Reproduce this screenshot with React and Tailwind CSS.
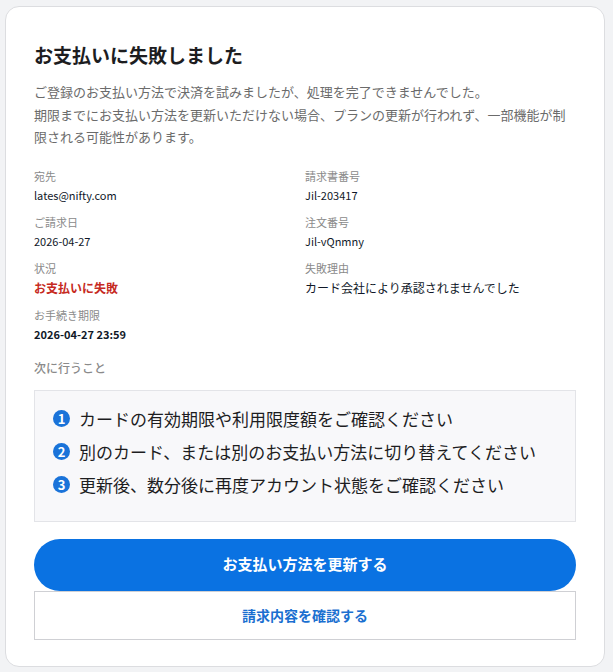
const INFO = [
    { label: '宛先', value: 'lates@nifty.com', cls: 'text-[11px] text-gray-900 leading-[18px]' },
    { label: '請求書番号', value: 'Jil-203417', cls: 'text-[11px] text-gray-900 leading-[18px]' },
    { label: 'ご請求日', value: '2026-04-27', cls: 'text-[11px] text-gray-900 leading-[18px]' },
    { label: '注文番号', value: 'Jil-vQnmny', cls: 'text-[11px] text-gray-900 leading-[18px]' },
    { label: '状況', value: 'お支払いに失敗', cls: 'text-[12px] font-bold text-[#c62a22] leading-[19px]' },
    { label: '失敗理由', value: 'カード会社により承認されませんでした', cls: 'text-[12px] text-gray-900 leading-[19px]' },
    { label: 'お手続き期限', value: '2026-04-27 23:59', cls: 'text-[11px] font-bold text-gray-900 leading-[18px]' },
];

const STEPS = [
    'カードの有効期限や利用限度額をご確認ください',
    '別のカード、または別のお支払い方法に切り替えてください',
    '更新後、数分後に再度アカウント状態をご確認ください',
];

export default function App() {
    return (
        <div className="min-h-[672px] bg-[#f2f3f5] pt-[6px] pl-[5px] pb-[5px] font-['Noto_Sans_CJK_JP',sans-serif]">
            <div className="w-[600px] h-[661px] bg-white border border-[#dcdde0] rounded-[14px] pt-[34px] px-[28px] pb-[26px]">
                <h1 className="text-[19px] leading-[28px] font-bold text-[#1d1d1f]">お支払いに失敗しました</h1>
                <p className="mt-[12px] text-[13px] leading-[22.5px] text-[#6b6b6b]">
                    ご登録のお支払い方法で決済を試みましたが、処理を完了できませんでした。
                    <br />
                    期限までにお支払い方法を更新いただけない場合、プランの更新が行われず、一部機能が制限される可能性があります。
                </p>

                <div className="mt-[19px] grid grid-cols-2 gap-y-[10px]">
                    {INFO.map(item => (
                        <div key={item.label}>
                            <div className="text-[11px] leading-[16px] text-[#8a8a8a]">{item.label}</div>
                            <div className={`mt-[2px] ${item.cls}`}>{item.value}</div>
                        </div>
                    ))}
                </div>

                <div className="mt-[16px] text-[12px] leading-[18px] font-medium text-[#8a8a8a]">次に行うこと</div>

                <ol className="mt-[13px] h-[132px] bg-[#f8f8fa] border border-[#e3e4e8] pt-[11px] pb-[19px] px-[18px]">
                    {STEPS.map((s, i) => (
                        <li key={i} className="flex items-center gap-[9px] text-[17px] leading-[33px] text-[#1d1d1f]">
                            <span className="w-[17px] h-[17px] rounded-full bg-[#1a73d9] text-white text-[13px] font-bold leading-none flex items-center justify-center shrink-0">
                                {i + 1}
                            </span>
                            {s}
                        </li>
                    ))}
                </ol>

                <button className="mt-[17px] w-full h-[52px] rounded-full bg-[#0a72e2] text-white text-[15px] font-bold">
                    お支払い方法を更新する
                </button>
                <button className="w-full h-[49px] border border-[#cfd0d4] bg-white text-[#1a6fd0] text-[14px] font-bold">
                    請求内容を確認する
                </button>
            </div>
        </div>
    );
}
